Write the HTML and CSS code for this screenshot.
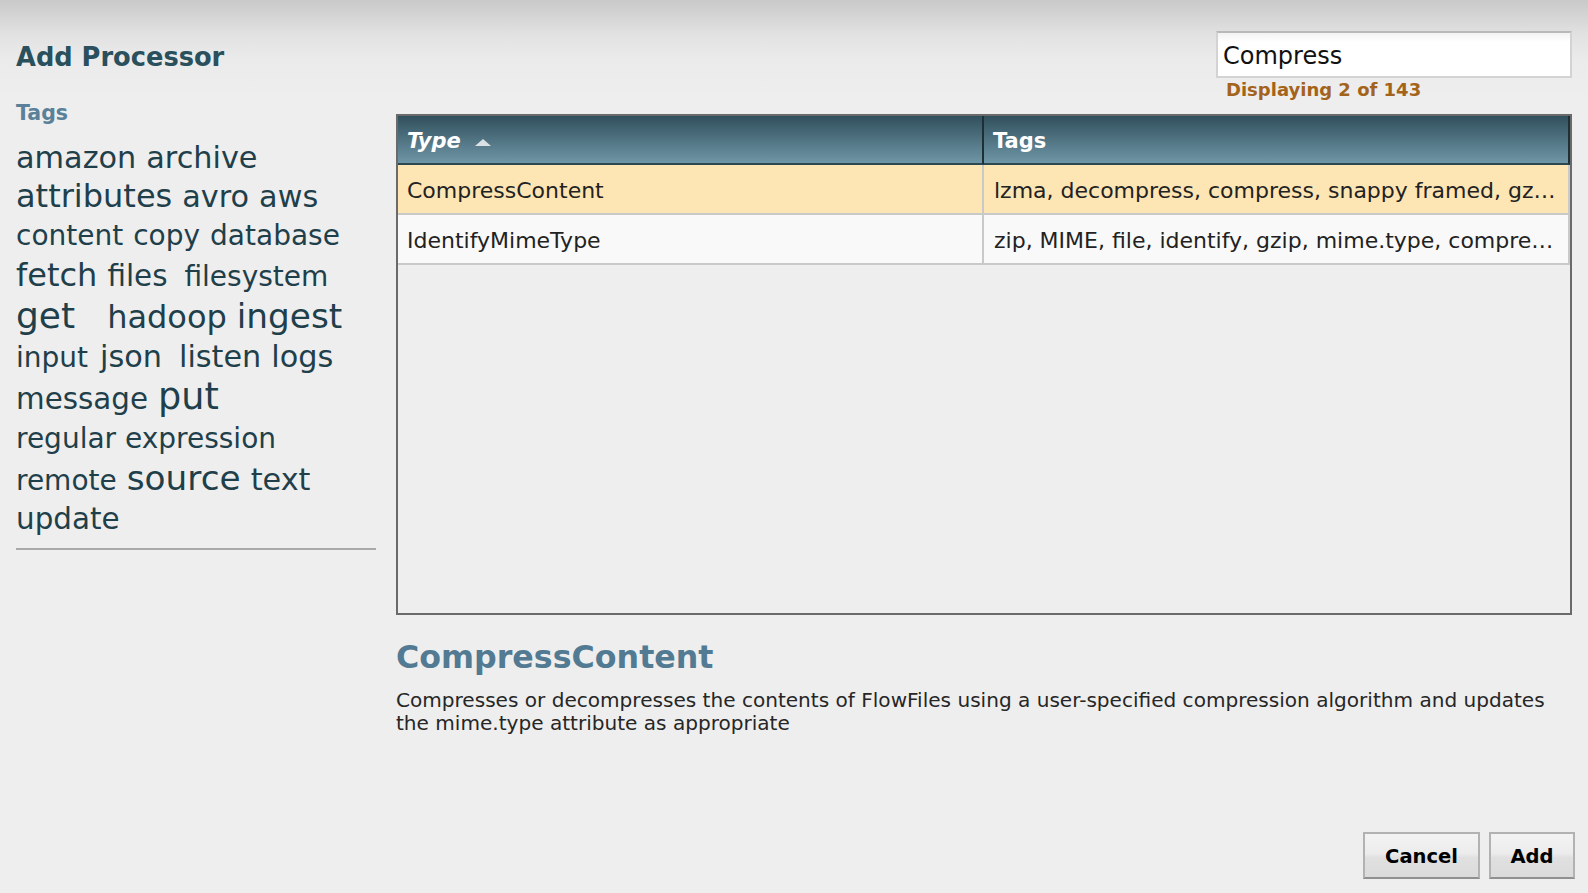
FILE: index.html
```html
<!DOCTYPE html>
<html lang="en">
<head>
<meta charset="utf-8">
<title>Add Processor</title>
<link rel="stylesheet" href="styles.css">
</head>
<body>
<div class="dialog">
  <div class="dialog-body">
    <aside class="side">
      <h1 class="title">Add Processor</h1>
      <div class="tags-label">Tags</div>
      <ul class="cloud">
        <li class="s30">amazon</li>
        <li class="s30">archive</li>
        <li class="s32">attributes</li>
        <li class="s30">avro</li>
        <li class="s30 small-after">aws</li>
        <li class="s28">content</li>
        <li class="s28">copy</li>
        <li class="s28">database</li>
        <li class="s32">fetch</li>
        <li class="s29 wide-after">files</li>
        <li class="s28">filesystem</li>
        <li class="s36 extra-after">get</li>
        <li class="s32">hadoop</li>
        <li class="s34">ingest</li>
        <li class="s28 small-after">input</li>
        <li class="s30 mid-after">json</li>
        <li class="s30">listen</li>
        <li class="s30">logs</li>
        <li class="s29">message</li>
        <li class="s37">put</li>
        <li class="s28">regular expression</li>
        <li class="s28">remote</li>
        <li class="s34">source</li>
        <li class="s30">text</li>
        <li class="s29">update</li>
      </ul>
      <hr class="cloud-rule">
    </aside>
    <main class="main">
      <div class="filter">
        <div class="filter-input">Compress</div>
        <div class="filter-count">Displaying 2 of 143</div>
      </div>
      <div class="table">
        <div class="thead">
          <div class="th">Type <span class="sort-asc"></span></div>
          <div class="th th-tags">Tags</div>
        </div>
        <div class="tr selected">
          <div class="td">CompressContent</div>
          <div class="td">lzma, decompress, compress, snappy framed, gzip, snappy, bzip2, xz-lzma2, snappy-hadoop, lz4-framed, content</div>
        </div>
        <div class="tr">
          <div class="td">IdentifyMimeType</div>
          <div class="td">zip, MIME, file, identify, gzip, mime.type, compression, tar, bzip2</div>
        </div>
      </div>
      <h2 class="desc-title">CompressContent</h2>
      <p class="desc">Compresses or decompresses the contents of FlowFiles using a user-specified compression algorithm and updates the mime.type attribute as appropriate</p>
    </main>
  </div>
  <div class="footer">
    <button class="btn btn-cancel">Cancel</button>
    <button class="btn btn-add">Add</button>
  </div>
</div>
</body>
</html>
```
FILE: styles.css
```css
* { box-sizing: border-box; }
html, body { margin: 0; padding: 0; }
body {
  width: 1588px;
  height: 893px;
  overflow: hidden;
  font-family: "DejaVu Sans", Verdana, sans-serif;
  color: #262626;
  background: linear-gradient(#c9c9c9 0px, #e2e2e2 35px, #ebebeb 60px, #eeeeee 100px, #eeeeee 100%);
}
.dialog {
  display: flex;
  flex-direction: column;
  height: 893px;
}
.dialog-body {
  flex: 1;
  display: flex;
  gap: 20px;
  padding: 0 16px 0 16px;
}

/* left column */
.side {
  width: 360px;
  flex: none;
  padding-top: 41px;
}
.title {
  margin: 0;
  font-size: 25.7px;
  line-height: 32px;
  font-weight: bold;
  color: #29505c;
}
.tags-label {
  margin-top: 28px;
  font-size: 20.5px;
  line-height: 24px;
  font-weight: bold;
  color: #5a8199;
}
.cloud {
  list-style: none;
  margin: 13px 0 0 0;
  padding: 0;
  display: flex;
  flex-wrap: wrap;
  align-items: baseline;
  column-gap: 10px;
  color: #1f3f4a;
}
.cloud li {
  line-height: 39.2px;
  white-space: nowrap;
}
.s28 { font-size: 28px; }
.s29 { font-size: 29.4px; }
.s30 { font-size: 30.3px; }
.s32 { font-size: 32px; }
.s34 { font-size: 34.3px; }
.s36 { font-size: 36px; }
.s37 { font-size: 36.6px; }
.extra-after { margin-right: 22px; }
.wide-after { margin-right: 7px; }
.mid-after { margin-right: 7px; }
.small-after { margin-right: 2px; }
.cloud-rule {
  margin: 9px 0 0 0;
  border: 0;
  border-top: 2px solid #a9a9a9;
  height: 0;
}

/* right column */
.main {
  flex: 1;
  display: flex;
  flex-direction: column;
  min-width: 0;
}
.filter {
  align-self: flex-end;
  width: 356px;
  margin-top: 31px;
}
.filter-input {
  height: 47px;
  background: linear-gradient(#f2f2f2 0px, #ffffff 9px, #ffffff 100%);
  border: 2px solid #d3d3d3;
  border-top-color: #b9b9b9;
  font-size: 24px;
  line-height: 42px;
  padding: 2px 0 0 5px;
  color: #111;
}
.filter-count {
  margin-top: 2px;
  padding-left: 10px;
  font-size: 18px;
  line-height: 20px;
  font-weight: bold;
  color: #a3631b;
}

.table {
  margin-top: 14px;
  height: 501px;
  border: 2px solid #6a6a6a;
  background: #eeeeee;
}
.thead, .tr {
  display: grid;
  grid-template-columns: 1fr 1fr;
}
.th {
  height: 49px;
  padding: 3px 9px 0 9px;
  line-height: 45px;
  font-size: 21px;
  font-weight: bold;
  color: #fff;
  background: linear-gradient(#31505c, #6f96a7);
  border-bottom: 2px solid #2b4853;
  border-right: 2px solid #1c3036;
}
.th:first-child { font-style: italic; }
.sort-asc {
  display: inline-block;
  width: 0;
  height: 0;
  margin-left: 7px;
  vertical-align: 2px;
  border-left: 8px solid transparent;
  border-right: 8px solid transparent;
  border-bottom: 7px solid rgba(255, 255, 255, 0.78);
}
.td {
  height: 50px;
  padding: 3px 12px 0 9px;
  line-height: 46px;
  font-size: 22px;
  color: #222;
  background: #f9f9f9;
  border-bottom: 2px solid #c9c9c9;
  border-right: 2px solid #c9c9c9;
  white-space: nowrap;
  overflow: hidden;
  text-overflow: ellipsis;
}
.td + .td { padding-left: 10px; }
.selected .td { background: #fde5b4; }

.desc-title {
  margin: 22px 0 0 0;
  font-size: 31.7px;
  line-height: 40px;
  font-weight: bold;
  color: #527a92;
}
.desc {
  margin: 12px 0 0 0;
  font-size: 20.07px;
  line-height: 23px;
  color: #262626;
}

/* footer */
.footer {
  display: flex;
  justify-content: flex-end;
  gap: 9px;
  padding: 0 13px 14px 0;
}
.btn {
  height: 47px;
  border: 2px solid #b2b2b2;
  border-bottom-color: #909090;
  background: linear-gradient(#f3f3f3, #ececec 45%, #e0e0e0 55%, #dbdbdb);
  font-family: "DejaVu Sans", Verdana, sans-serif;
  font-size: 19.5px;
  font-weight: bold;
  line-height: 45px;
  color: #000;
  padding: 0;
  text-align: center;
}
.btn-cancel { width: 117px; }
.btn-add { width: 86px; }
```
